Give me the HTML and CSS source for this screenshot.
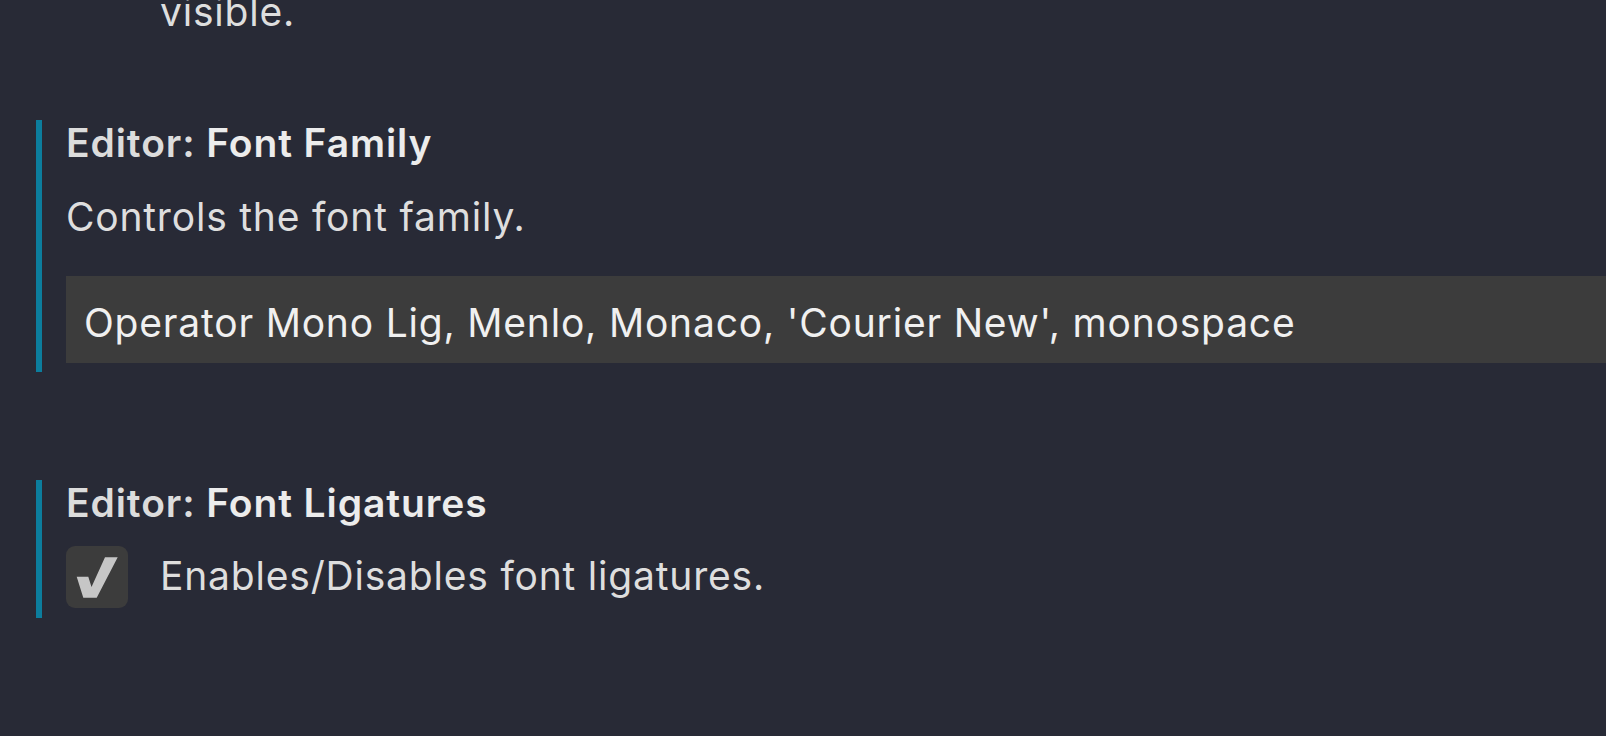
FILE: index.html
```html
<!DOCTYPE html>
<html>
<head>
<meta charset="utf-8">
<link rel="stylesheet" href="styles.css">
</head>
<body>
<div class="settings">
  <div class="prev-tail">visible.</div>

  <div class="item">
    <div class="title"><span class="cat">Editor: </span>Font Family</div>
    <div class="desc">Controls the font family.</div>
    <div class="input">Operator Mono Lig, Menlo, Monaco, 'Courier New', monospace</div>
  </div>

  <div class="item item-check">
    <div class="title"><span class="cat">Editor: </span>Font Ligatures</div>
    <div class="check-row">
      <div class="checkbox">
        <svg width="62" height="62" viewBox="0 0 62 62"><polygon points="10.7,30.7 22.3,30.7 25.5,41 39,11.3 51.7,11.3 30.7,51.7 17.3,51.7" fill="#c6c6c6"/></svg>
      </div>
      <div class="check-label">Enables/Disables font ligatures.</div>
    </div>
  </div>
</div>
</body>
</html>
```

FILE: styles.css
```css
html, body {
  margin: 0;
  padding: 0;
  background: #282a36;
  height: 100%;
  overflow: hidden;
}
.settings {
  font-family: Inter, "Noto Sans", sans-serif;
  font-size: 39px;
  line-height: 46px;
  letter-spacing: 0.8px;
  color: #dedede;
  padding-left: 36px;
}
.prev-tail {
  margin-top: -11px;
  padding-left: 124px;
  color: #dedede;
}
.item {
  border-left: 6px solid #0c7d9d;
  padding-left: 24px;
  padding-bottom: 9px;
  margin-top: 85px;
}
.item-check {
  margin-top: 108px;
  padding-bottom: 10px;
}
.title {
  font-weight: 600;
  letter-spacing: 0.9px;
  color: #ececec;
}
.title .cat {
  color: #dcdcdc;
}
.desc {
  margin-top: 28px;
}
.input {
  margin-top: 36px;
  background: #3c3c3c;
  color: #f0f0f0;
  height: 87px;
  box-sizing: border-box;
  padding: 24px 18px 0 18px;
  white-space: nowrap;
}
.check-row {
  margin-top: 20px;
  display: flex;
  align-items: center;
  gap: 32px;
}
.checkbox {
  width: 62px;
  height: 62px;
  background: #3c3c3c;
  border-radius: 9px;
  flex: none;
}
.checkbox svg {
  display: block;
}
.check-label {
  position: relative;
  top: -1px;
}
```
